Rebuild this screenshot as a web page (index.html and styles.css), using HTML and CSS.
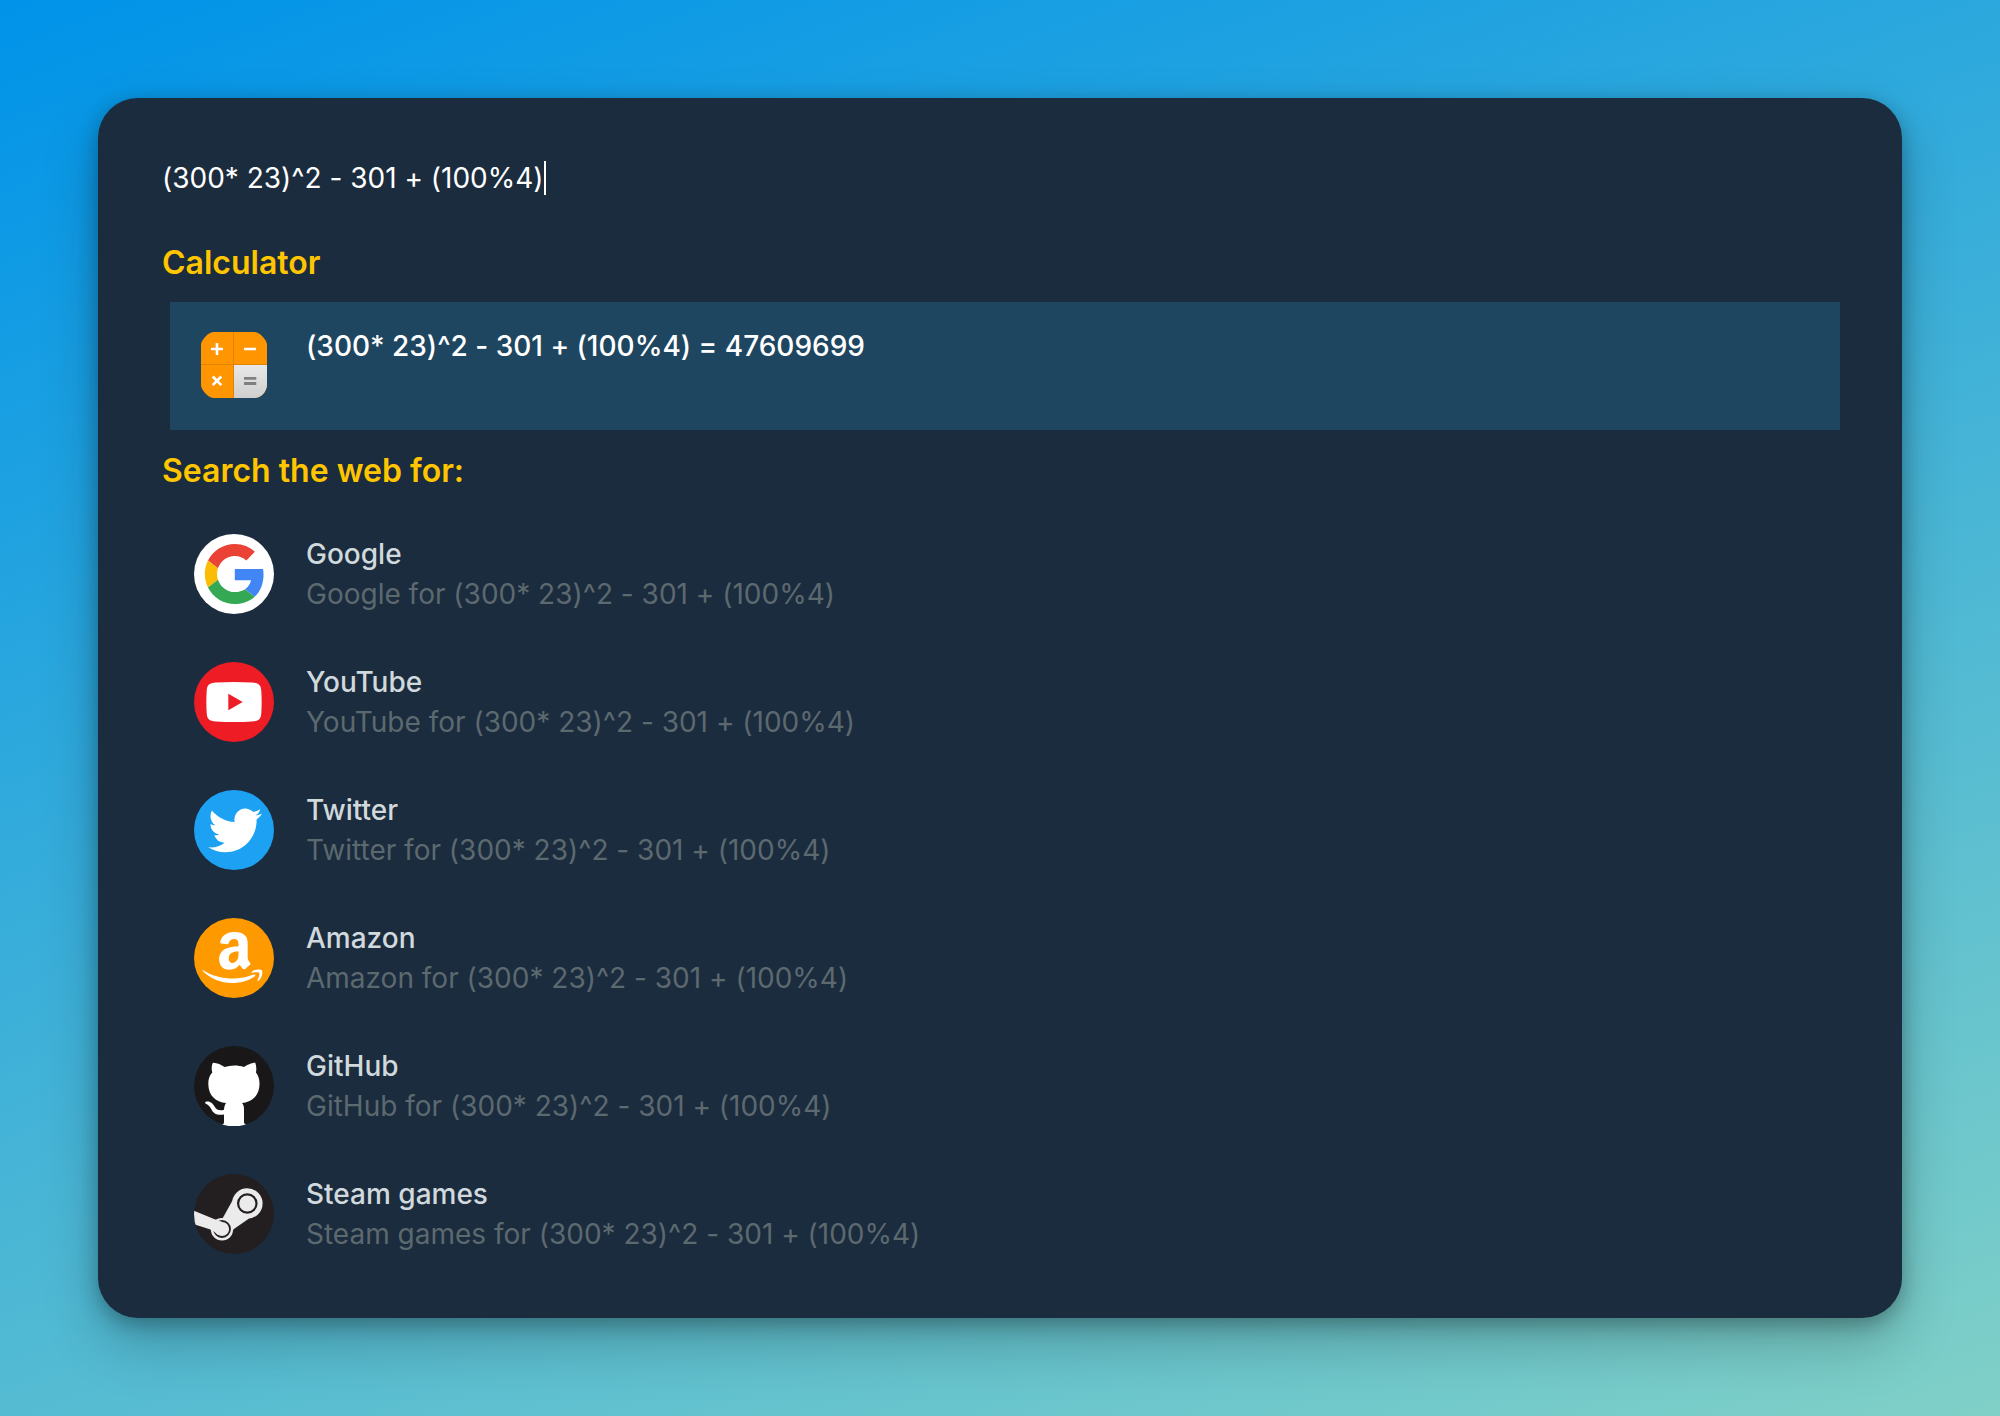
FILE: index.html
```html
<!DOCTYPE html>
<html lang="en">
<head>
<meta charset="utf-8">
<meta name="viewport" content="width=device-width, initial-scale=1">
<title>Launcher</title>
<link rel="stylesheet" href="styles.css">
</head>
<body>
<main class="launcher">
  <div class="query">
    <input class="query-input" type="text" aria-label="Search" value="(300* 23)^2 - 301 + (100%4)" autocomplete="off" spellcheck="false">
    <span class="caret" aria-hidden="true"></span>
  </div>

  <section class="group">
    <h2 class="group-title">Calculator</h2>
    <button class="result result-selected" type="button">
      <svg class="icon" viewBox="0 1 80 80" aria-hidden="true">
        <defs>
          <clipPath id="calc-shape"><path d="M20 7H60Q64 7 68 11Q73 16 73 20V59C73 67 67 73 60 73H20Q16 73 12 69Q7 64 7 60V20Q7 16 12 11Q16 7 20 7z"/></clipPath>
          <linearGradient id="calc-key" x1="0" y1="0" x2="0" y2="1"><stop offset="0" stop-color="#e8e8e8"/><stop offset="1" stop-color="#cfcfcf"/></linearGradient>
        </defs>
        <g clip-path="url(#calc-shape)">
          <path fill="#ff9500" d="M7 7h66v66H7z"/>
          <path fill="url(#calc-key)" d="M40 40h33v33H40z"/>
          <path stroke="#e28300" d="M39.500 7v66M7 39.500h66" fill="none"/>
        </g>
        <path stroke="#fff" stroke-width="2.600" fill="none" d="M17 24h12M23 18v12M50 24h12M18.700 51.500l8.600 8.600M27.300 51.500l-8.600 8.600"/>
        <path stroke="#808080" stroke-width="2.800" d="M50 53.400h12.300M50 58.500h12.300"/>
      </svg>
      <span class="result-text">
        <span class="result-name">(300* 23)^2 - 301 + (100%4) = 47609699</span>
      </span>
    </button>
  </section>

  <section class="group">
    <h2 class="group-title">Search the web for:</h2>
    <a class="result" href="#google">
      <svg class="icon" viewBox="0 0 80 80" aria-hidden="true">
        <circle cx="40" cy="40" r="40" fill="#fff"/>
        <g transform="translate(10.800 10) scale(1.250)">
          <path fill="#ea4335" d="M24 9.500c3.540 0 6.710 1.220 9.210 3.600l6.850-6.850C35.900 2.380 30.470 0 24 0 14.620 0 6.510 5.380 2.560 13.220l7.980 6.190C12.430 13.720 17.740 9.500 24 9.500z"/>
          <path fill="#4285f4" d="M46.980 24.550c0-1.570-.150-3.090-.380-4.550H24v9.020h12.940c-.580 2.960-2.260 5.480-4.780 7.180l7.730 6c4.510-4.180 7.090-10.360 7.090-17.650z"/>
          <path fill="#fbbc05" d="M10.530 28.590c-.480-1.450-.760-2.990-.760-4.590s.270-3.140.760-4.590l-7.980-6.190C.920 16.460 0 20.120 0 24c0 3.880.920 7.540 2.560 10.780l7.970-6.190z"/>
          <path fill="#34a853" d="M24 48c6.480 0 11.930-2.130 15.890-5.810l-7.730-6c-2.150 1.450-4.920 2.300-8.160 2.300-6.260 0-11.570-4.220-13.470-9.910l-7.980 6.190C6.510 42.620 14.620 48 24 48z"/>
        </g>
      </svg>
      <span class="result-text">
        <span class="result-name">Google</span>
        <span class="result-detail">Google for (300* 23)^2 - 301 + (100%4)</span>
      </span>
    </a>
    <a class="result" href="#youtube">
      <svg class="icon" viewBox="0 0 80 80" aria-hidden="true">
        <circle cx="40" cy="40" r="40" fill="#ee1c25"/>
        <path fill="#fff" d="M22 20.500Q40 19.500 58 20.500C65 21 67 23 67.300 29Q68 40 67.300 51C67 57 65 59 58 59.500Q40 60.500 22 59.500C15 59 13 57 12.700 51Q12 40 12.700 29C13 23 15 21 22 20.500z"/>
        <path fill="#ee1c25" d="M34.300 31.700 48.700 40 34.300 48.300z"/>
      </svg>
      <span class="result-text">
        <span class="result-name">YouTube</span>
        <span class="result-detail">YouTube for (300* 23)^2 - 301 + (100%4)</span>
      </span>
    </a>
    <a class="result" href="#twitter">
      <svg class="icon" viewBox="0 0 80 80" aria-hidden="true">
        <circle cx="40" cy="40" r="40" fill="#1da1f2"/>
        <path fill="#fff" transform="translate(14.300 13.500) scale(2.240)" d="M23.953 4.570a10 10 0 01-2.825.775 4.958 4.958 0 002.163-2.723c-.951.555-2.005.959-3.127 1.184a4.920 4.920 0 00-8.384 4.482C7.690 8.095 4.067 6.130 1.640 3.162a4.822 4.822 0 00-.666 2.475c0 1.710.870 3.213 2.188 4.096a4.904 4.904 0 01-2.228-.616v.060a4.923 4.923 0 003.946 4.827 4.996 4.996 0 01-2.212.085 4.936 4.936 0 004.604 3.417 9.867 9.867 0 01-6.102 2.105c-.390 0-.779-.023-1.170-.067a13.995 13.995 0 007.557 2.209c9.053 0 13.998-7.496 13.998-13.985 0-.210 0-.420-.015-.630A9.935 9.935 0 0024 4.590z"/>
      </svg>
      <span class="result-text">
        <span class="result-name">Twitter</span>
        <span class="result-detail">Twitter for (300* 23)^2 - 301 + (100%4)</span>
      </span>
    </a>
    <a class="result" href="#amazon">
      <svg class="icon" viewBox="0 0 80 80" aria-hidden="true">
        <circle cx="40" cy="40" r="40" fill="#ff9900"/>
        <path fill="#fff" transform="translate(8.200 11.200) scale(2.550)" d="M6.610 11.802c0-1.002.247-1.860.742-2.570.495-.710 1.170-1.250 2.040-1.615.796-.335 1.756-.575 2.912-.720.390-.046 1.033-.103 1.920-.174v-.370c0-.930-.105-1.558-.300-1.875-.302-.430-.780-.650-1.440-.650h-.182c-.480.046-.896.196-1.246.460-.350.270-.575.630-.675 1.096-.060.300-.206.465-.435.510l-2.520-.315c-.248-.060-.372-.180-.372-.390 0-.046.007-.090.022-.150.247-1.290.855-2.250 1.820-2.880.976-.616 2.100-.975 3.390-1.050h.540c1.650 0 2.957.434 3.888 1.290.135.150.270.300.405.480.120.165.224.314.283.450.075.134.150.330.195.570.060.254.105.420.135.510.030.104.062.300.076.615.010.313.020.493.020.553v5.280c0 .376.060.720.165 1.036.105.313.210.540.315.674l.510.674c.090.136.136.256.136.360 0 .120-.060.226-.180.314-1.200 1.050-1.860 1.620-1.963 1.710-.165.135-.375.150-.630.045a6.062 6.062 0 01-.526-.496l-.310-.347a9.391 9.391 0 01-.317-.420l-.300-.435c-.810.886-1.603 1.440-2.400 1.665-.494.150-1.093.227-1.830.227-1.110 0-2.040-.343-2.760-1.034-.720-.690-1.080-1.665-1.080-2.940zm3.753-.438c0 .566.140 1.020.425 1.364.285.340.675.512 1.155.512.045 0 .106-.007.195-.020.090-.016.134-.023.166-.023.614-.160 1.080-.553 1.424-1.178.165-.280.285-.580.360-.910.090-.320.120-.590.135-.800.015-.195.015-.540.015-1.005v-.540c-.840 0-1.484.060-1.920.180-1.275.360-1.920 1.170-1.920 2.430z"/>
        <path fill="#fff" d="M9.200 52.200C18 58 29 60.500 39 60.500 46 60.500 53 59.200 59.500 56.500 61.500 56 62 57.300 60.500 58.500 54 63 46 65 38.500 65 26 65 16 60 8.900 53.200 8.400 52.500 8.600 52 9.200 52.200z"/>
        <path fill="#fff" d="M57.500 54C60 51.200 66 51 68 52.300 69 56 67.500 60.500 64.500 62.700 63.600 63.200 63.100 62.800 63.500 62 65 59 65.800 56 65.200 54.800 64.200 53.800 60.500 54.300 58 54.700 57 54.800 57 54.400 57.500 54z"/>
      </svg>
      <span class="result-text">
        <span class="result-name">Amazon</span>
        <span class="result-detail">Amazon for (300* 23)^2 - 301 + (100%4)</span>
      </span>
    </a>
    <a class="result" href="#github">
      <svg class="icon" viewBox="0 0 80 80" aria-hidden="true">
        <circle cx="40" cy="40" r="40" fill="#191717"/>
        <path fill="#fff" d="M19.500 16.800C23 16.800 27.500 19 30.500 21 37 19 44 19 50 21 53 19 58 16.500 61.300 16.700 62.500 20 62.500 24 62 26.500 64.500 30 65.500 33 65.500 37.500 65.500 50 58 56 48 57 49.500 58.500 50 60.500 50 63V76C50 77.500 51 78.300 52.500 78.300A40 40 0 0 1 27.500 78.300C29.500 78.300 30 77.500 30 76V68.500C23 69.800 19.500 67.500 17.500 63.500 16 60.500 14 58.500 11.500 57.500 10.500 56.500 11.500 55.500 13.500 55.500 17 55.500 19 58 20.500 60.500 22.500 64 26 65.200 30 63.800 30.200 60.500 31 58.500 32 57 22 56 14.300 50 14.300 37.500 14.300 33 15.500 29.500 18.300 26.500 17.300 23 17.500 20 18.700 17z"/>
      </svg>
      <span class="result-text">
        <span class="result-name">GitHub</span>
        <span class="result-detail">GitHub for (300* 23)^2 - 301 + (100%4)</span>
      </span>
    </a>
    <a class="result" href="#steam">
      <svg class="icon" viewBox="0 0 80 80" aria-hidden="true">
        <defs><clipPath id="steam-disc"><circle cx="40" cy="40" r="40"/></clipPath></defs>
        <g clip-path="url(#steam-disc)">
          <path fill="#231f20" d="M0 0h80v80H0z"/>
          <path fill="#ebebeb" d="M38.200 27 28.500 44.500 38.500 56 55 44.500z"/>
          <circle cx="53.300" cy="29.500" r="15.300" fill="#ebebeb"/>
          <circle cx="53.300" cy="29.500" r="9.200" fill="#ebebeb" stroke="#231f20" stroke-width="2.200"/>
          <circle cx="28" cy="55.300" r="11.200" fill="#ebebeb"/>
          <circle cx="28" cy="55" r="8" fill="#ebebeb" stroke="#231f20" stroke-width="1.800"/>
          <path fill="#ebebeb" d="M-1 36.300 20 45 28.500 47.900 24 61 18 56 0 50.300z"/>
        </g>
      </svg>
      <span class="result-text">
        <span class="result-name">Steam games</span>
        <span class="result-detail">Steam games for (300* 23)^2 - 301 + (100%4)</span>
      </span>
    </a>
  </section>
</main>
</body>
</html>
```
FILE: styles.css
```css
* {
  box-sizing: border-box;
}

body {
  margin: 0;
  min-height: 100vh;
  padding: 98px;
  background: linear-gradient(160deg, #0093e9 0%, #80d0c7 100%);
  color: #d1d9dd;
  font-family: Inter, "Liberation Sans", sans-serif;
  font-size: 28px;
  font-feature-settings: "calt" 0;
  line-height: 40px;
}

.launcher {
  padding: 40px 62px 40px 64px;
  border-radius: 40px;
  background: #1b2c3e;
  box-shadow: 0 6px 20px rgba(0, 0, 0, 0.28), 0 26px 56px rgba(0, 0, 0, 0.22);
}

.query {
  display: flex;
  align-items: center;
  height: 80px;
  margin-bottom: 4px;
}

.query-input {
  field-sizing: content;
  padding: 0;
  border: 0;
  outline: 0;
  background: none;
  color: #fff;
  font: inherit;
  font-feature-settings: inherit;
}

.caret {
  width: 2px;
  height: 34px;
  background: #fff;
}

.group-title {
  margin: 0;
  padding-top: 2px;
  color: #ffc600;
  font-size: 32px;
  font-weight: 600;
  line-height: 78px;
}

.result {
  display: flex;
  gap: 32px;
  margin-left: 8px;
  padding: 24px;
  color: inherit;
  text-decoration: none;
}

.result-selected {
  width: calc(100% - 8px);
  border: 0;
  background: #1f4660;
  color: #fff;
  font: inherit;
  font-feature-settings: inherit;
  text-align: left;
}

.icon {
  flex: none;
  width: 80px;
  height: 80px;
}

.result-text {
  display: flex;
  flex-direction: column;
}

.result-name {
  font-weight: 500;
}

.result-detail {
  color: #5c696f;
}
```
